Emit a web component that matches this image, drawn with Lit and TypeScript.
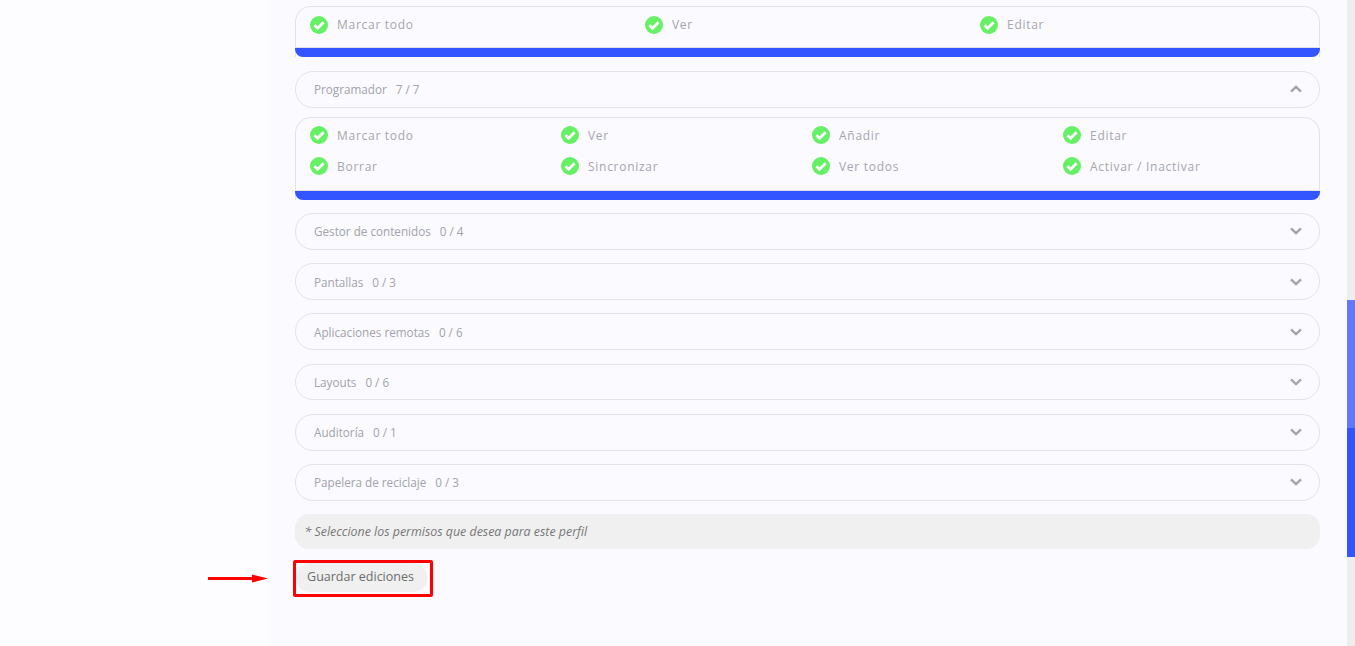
import { LitElement, html, css, svg } from "lit";
import { customElement } from "lit/decorators.js";

const check = html`<svg class="ck" viewBox="0 0 18 18" width="18" height="18">
  <circle cx="9" cy="9" r="9" fill="#66f066"></circle>
  <path d="M4.4 9.2 L7.6 12.3 L13.6 6.3" fill="none" stroke="#fff" stroke-width="2.8"></path>
</svg>`;

const chevron = (up: boolean) => html`<svg class="chev" viewBox="0 0 12 8" width="12" height="8">
  ${svg`<path d=${up ? "M1 6.6 L6 1.8 L11 6.6" : "M1 1.4 L6 6.2 L11 1.4"} fill="none" stroke="#a3a3aa" stroke-width="2.3"></path>`}
</svg>`;

@customElement("app-root")
export class AppRoot extends LitElement {
  static styles = css`
    :host { display: block; height: 646px; overflow: hidden; font-family: "Open Sans", "Noto Sans", sans-serif; background: #fdfdff; }
    .page { display: flex; height: 646px; position: relative; }
    .side { width: 268px; flex: none; background: #fdfdff; }
    .main { flex: 1; background: #fafaff; padding: 6px 27px 0; min-width: 0; }
    .scroll { width: 8px; flex: none; background: #eeeeee; display: flex; flex-direction: column; padding-top: 300px; }
    .thumb-a { height: 128px; background: #6179ff; }
    .thumb-b { height: 129px; background: #3355ff; }
    .panel { border: 1px solid #e3e3ea; border-bottom: 0; border-radius: 16px 16px 0 0; position: relative; }
    .panel::after { content: ""; display: block; height: 9px; background: #3355ff; border-radius: 0 0 8px 8px; margin: 0 -1px; box-shadow: 0 -1px 0 #e0e0e6; }
    .grid { display: grid; padding: 0 0 0 14px; }
    .g3 { grid-template-columns: repeat(3, 335px); height: 41px; padding-top: 2px; align-content: start; box-sizing: border-box; }
    .g4 { grid-template-columns: repeat(4, 251px); height: 73px; padding-top: 2px; align-content: start; box-sizing: border-box; }
    .item { display: flex; align-items: center; gap: 9px; height: 31px; font-size: 12px; letter-spacing: 0.72px; color: #a6a6ae; white-space: nowrap; }
    .ck { flex: none; display: block; }
    .acc { height: 36.8px; box-sizing: border-box; border: 1px solid #e3e3ea; border-radius: 18px; display: flex; align-items: center; justify-content: space-between; padding: 0 17px 0 18px; font-size: 11.7px; color: #a3a3ab; margin-bottom: 13.4px; }
    .acc span.n { margin-left: 9px; }
    .acc.open { margin: 14px 0 9px; }
    .panel.second { margin-bottom: 13.2px; }
    .chev { display: block; }
    .note { height: 35px; box-sizing: border-box; background: #f0f0f0; border-radius: 14px; display: flex; align-items: center; padding: 0 9.5px; font-size: 12.4px; font-style: italic; color: #777; }
    .frame { display: inline-block; margin: 11px 0 0 -2px; border: 3px solid #ff0000; padding: 0 3px 2px 0; border-radius: 2px; }
    .btn { display: block; height: 29px; width: 131px; border: 0; background: #f0f0f0; border-radius: 14px; font: 12.5px "Open Sans", sans-serif; color: #6c6c6c; padding: 0 2px 2px 0; }
    .arrow { position: absolute; left: 208px; top: 573px; display: block; }
  `;

  private row(label: string) {
    return html`<div class="item">${check}<span>${label}</span></div>`;
  }

  private acc(name: string, count: string, up = false) {
    return html`<div class="acc ${up ? "open" : ""}"><div>${name}<span class="n">${count}</span></div>${chevron(up)}</div>`;
  }

  render() {
    return html`<div class="page">
      <div class="side"></div>
      <div class="main">
        <div class="panel"><div class="grid g3">
          ${["Marcar todo", "Ver", "Editar"].map((l) => this.row(l))}
        </div></div>
        ${this.acc("Programador", "7 / 7", true)}
        <div class="panel second"><div class="grid g4">
          ${["Marcar todo", "Ver", "Añadir", "Editar", "Borrar", "Sincronizar", "Ver todos", "Activar / Inactivar"].map((l) => this.row(l))}
        </div></div>
        ${this.acc("Gestor de contenidos", "0 / 4")}
        ${this.acc("Pantallas", "0 / 3")}
        ${this.acc("Aplicaciones remotas", "0 / 6")}
        ${this.acc("Layouts", "0 / 6")}
        ${this.acc("Auditoría", "0 / 1")}
        ${this.acc("Papelera de reciclaje", "0 / 3")}
        <div class="note">* Seleccione los permisos que desea para este perfil</div>
        <div class="frame"><button class="btn">Guardar ediciones</button></div>
      </div>
      <div class="scroll"><div class="thumb-a"></div><div class="thumb-b"></div></div>
      <svg class="arrow" width="60" height="11" viewBox="0 0 60 11">
        <path d="M0 4 H46 V7 H0 Z M44 1.4 L60 5.5 L44 9.6 Z" fill="#ff0000"></path>
      </svg>
    </div>`;
  }
}
